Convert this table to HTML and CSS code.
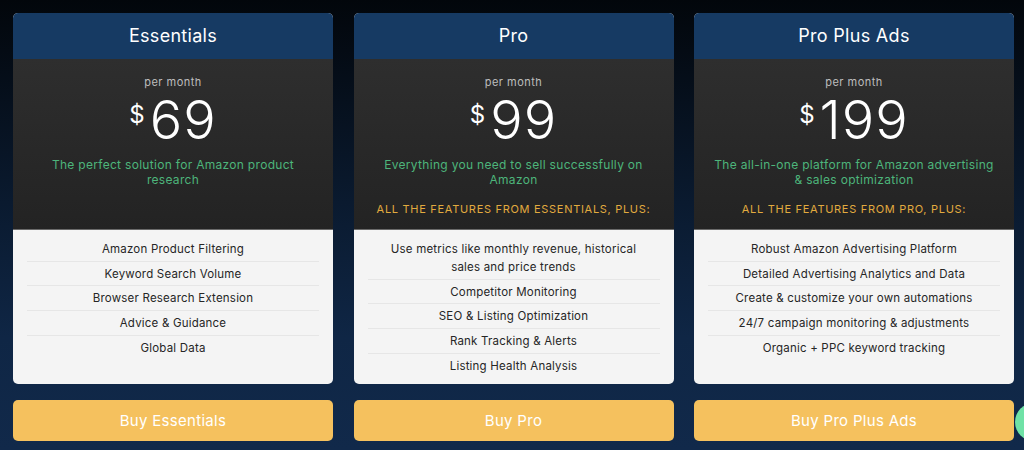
FILE: index.html
```html
<!DOCTYPE html>
<html lang="en">
<head>
  <meta charset="UTF-8">
  <meta name="viewport" content="width=device-width, initial-scale=1.0">
  <title>Pricing</title>
  <link rel="stylesheet" href="styles.css">
</head>
<body>
  <div class="plans">
    <!-- Essentials -->
    <div class="plan">
      <div class="plan-card">
        <div class="plan-name">Essentials</div>
        <div class="plan-price">
          <div class="per-month">per month</div>
          <div class="price"><span class="currency">$</span>69</div>
          <div class="tagline">The perfect solution for Amazon product research</div>
        </div>
        <ul class="features">
          <li>Amazon Product Filtering</li>
          <li>Keyword Search Volume</li>
          <li>Browser Research Extension</li>
          <li>Advice &amp; Guidance</li>
          <li>Global Data</li>
        </ul>
      </div>
      <button class="buy-btn">Buy Essentials</button>
    </div>

    <!-- Pro -->
    <div class="plan">
      <div class="plan-card">
        <div class="plan-name">Pro</div>
        <div class="plan-price">
          <div class="per-month">per month</div>
          <div class="price"><span class="currency">$</span>99</div>
          <div class="tagline">Everything you need to sell successfully on Amazon</div>
          <div class="includes">All the features from Essentials, plus:</div>
        </div>
        <ul class="features">
          <li>Use metrics like monthly revenue, historical sales and price trends</li>
          <li>Competitor Monitoring</li>
          <li>SEO &amp; Listing Optimization</li>
          <li>Rank Tracking &amp; Alerts</li>
          <li>Listing Health Analysis</li>
        </ul>
      </div>
      <button class="buy-btn">Buy Pro</button>
    </div>

    <!-- Pro Plus Ads -->
    <div class="plan">
      <div class="plan-card">
        <div class="plan-name">Pro Plus Ads</div>
        <div class="plan-price">
          <div class="per-month">per month</div>
          <div class="price"><span class="currency">$</span>199</div>
          <div class="tagline">The all-in-one platform for Amazon advertising &amp; sales optimization</div>
          <div class="includes">All the features from Pro, plus:</div>
        </div>
        <ul class="features">
          <li>Robust Amazon Advertising Platform</li>
          <li>Detailed Advertising Analytics and Data</li>
          <li>Create &amp; customize your own automations</li>
          <li>24/7 campaign monitoring &amp; adjustments</li>
          <li>Organic + PPC keyword tracking</li>
        </ul>
      </div>
      <button class="buy-btn">Buy Pro Plus Ads</button>
    </div>
  </div>

  <!-- Chat bubble -->
  <div class="chat-bubble"></div>
</body>
</html>
```

FILE: styles.css
```css
:root {
  --header-blue: #163a63;
  --dark-top: #2e2e2e;
  --dark-bottom: #232323;
  --list-bg: #f4f4f4;
  --green: #4db57b;
  --gold: #e2ab3f;
  --button: #f5c15e;
  --text-dark: #262626;
}

html, body {
  height: 100%;
}

body {
  font-family: 'Inter', 'Liberation Sans', sans-serif;
  margin: 0;
  padding: 13px;
  box-sizing: border-box;
  background: linear-gradient(#02060b 0%, #0a1a2f 45%, #0f2645 75%, #11294a 100%);
  overflow: hidden;
}

.plans {
  display: grid;
  grid-template-columns: repeat(3, 320px);
  column-gap: 20.5px;
}

.plan {
  display: flex;
  flex-direction: column;
}

.plan-card {
  flex: 1;
  border-radius: 5px;
  overflow: hidden;
  display: flex;
  flex-direction: column;
  background: var(--list-bg);
}

.plan-name {
  background: var(--header-blue);
  color: #fff;
  height: 46px;
  line-height: 46px;
  text-align: center;
  font-size: 18px;
  font-weight: 400;
  letter-spacing: 0.3px;
}

.plan-price {
  height: 170px;
  box-sizing: border-box;
  padding: 16px 20px 0;
  text-align: center;
  background: linear-gradient(var(--dark-top), var(--dark-bottom));
}

.per-month {
  color: #bdbdbd;
  font-size: 11px;
  line-height: 14px;
  letter-spacing: 0.5px;
}

.price {
  margin-top: 3px;
  color: #fff;
  font-size: 54px;
  line-height: 56px;
  font-weight: 300;
  letter-spacing: 1px;
}

.currency {
  font-size: 24px;
  line-height: 46px;
  vertical-align: top;
  margin-right: 5px;
  font-weight: 400;
  letter-spacing: 0;
}

.tagline {
  margin: 9px auto 0;
  max-width: 290px;
  color: var(--green);
  font-size: 12px;
  line-height: 15px;
  letter-spacing: 0.3px;
}

.includes {
  margin-top: 15px;
  color: var(--gold);
  font-size: 11px;
  line-height: 14px;
  letter-spacing: 0.7px;
  text-transform: uppercase;
}

.features {
  flex: 1;
  list-style: none;
  margin: 0;
  padding: 7px 14px 7px;
  border-top: 1px solid #6a6a6a;
}

.features li {
  color: var(--text-dark);
  font-size: 11.5px;
  line-height: 18px;
  letter-spacing: 0.2px;
  text-align: center;
  padding: 3px 20px 2.7px;
  border-bottom: 1px solid #e6e6e6;
}

.features li:last-child {
  border-bottom: none;
}

.buy-btn {
  margin-top: 16px;
  height: 41px;
  border: none;
  border-radius: 5px;
  background: var(--button);
  color: #fff;
  font-family: inherit;
  font-size: 15px;
  letter-spacing: 0.3px;
  cursor: pointer;
}

.chat-bubble {
  position: fixed;
  left: 1015px;
  top: 403px;
  width: 38px;
  height: 38px;
  border-radius: 50%;
  background: #6fe2a6;
}
```
